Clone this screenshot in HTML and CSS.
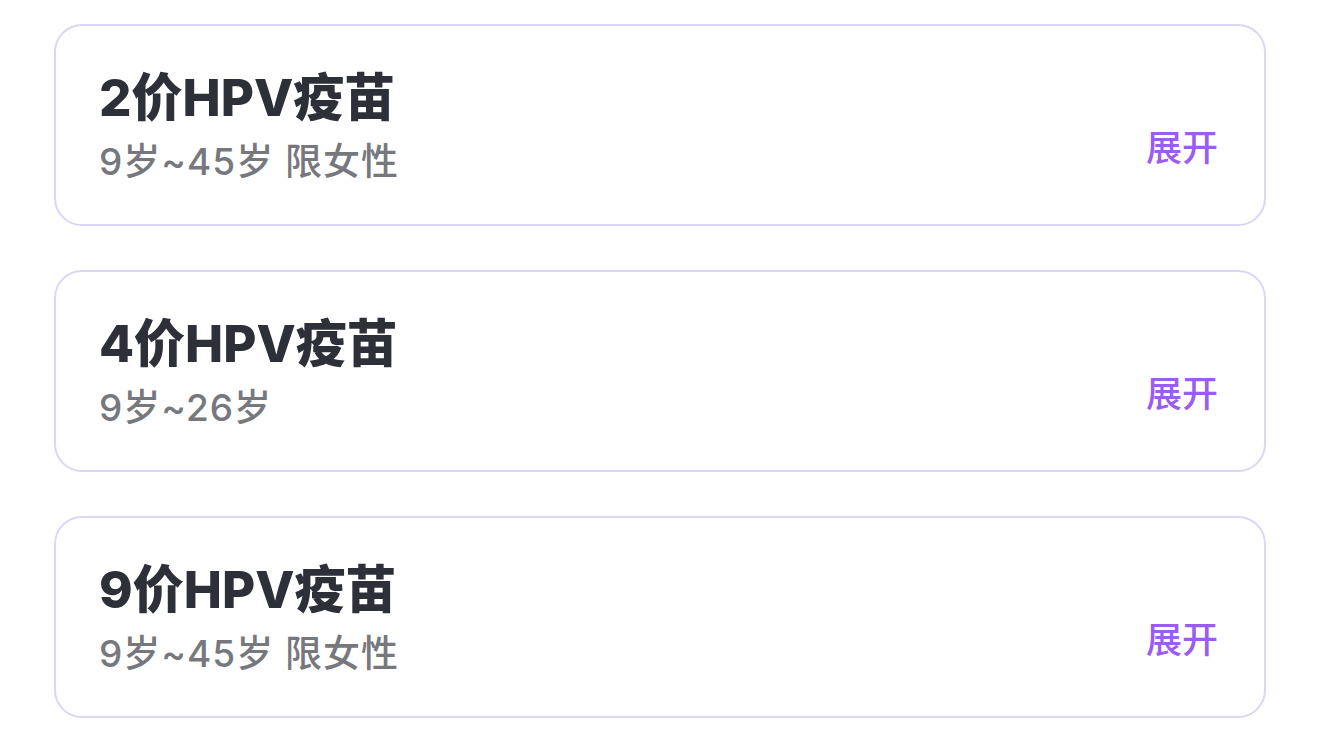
FILE: index.html
```html
<!doctype html>
<html lang="zh-CN">
<head>
	<meta charset="UTF-8">
	<title>HPV疫苗</title>
	<link rel="stylesheet" href="styles.css">
</head>
<body>
	<div class="list">
		<div class="card">
			<div class="info">
				<div class="title">2价HPV疫苗</div>
				<div class="sub">9岁~45岁 限女性</div>
			</div>
			<div class="more">展开</div>
		</div>
		<div class="card">
			<div class="info">
				<div class="title">4价HPV疫苗</div>
				<div class="sub">9岁~26岁</div>
			</div>
			<div class="more">展开</div>
		</div>
		<div class="card">
			<div class="info">
				<div class="title">9价HPV疫苗</div>
				<div class="sub">9岁~45岁 限女性</div>
			</div>
			<div class="more">展开</div>
		</div>
	</div>
</body>
</html>
```
FILE: styles.css
```css
body{
	margin: 0;
	background: #fff;
	font-family: Inter, "Noto Sans CJK SC", sans-serif;
}
.list{
	display: flex;
	flex-direction: column;
	gap: 44px;
	padding: 24px 54px;
}
.card{
	height: 202px;
	box-sizing: border-box;
	border: 2px solid #dcd6f4;
	border-radius: 28px;
	display: flex;
	justify-content: space-between;
	padding: 0 46px 0 43px;
}
.info{
	padding-top: 42px;
}
.title{
	font-size: 51px;
	font-weight: 800;
	line-height: 60px;
	color: #2d3038;
}
.sub{
	font-size: 37px;
	font-weight: 500;
	letter-spacing: 1px;
	line-height: 48px;
	color: #76787e;
	margin-top: 10px;
}
.more{
	font-size: 36px;
	line-height: 48px;
	color: #9b5cf0;
	font-weight: 500;
	padding-top: 98px;
}
```
